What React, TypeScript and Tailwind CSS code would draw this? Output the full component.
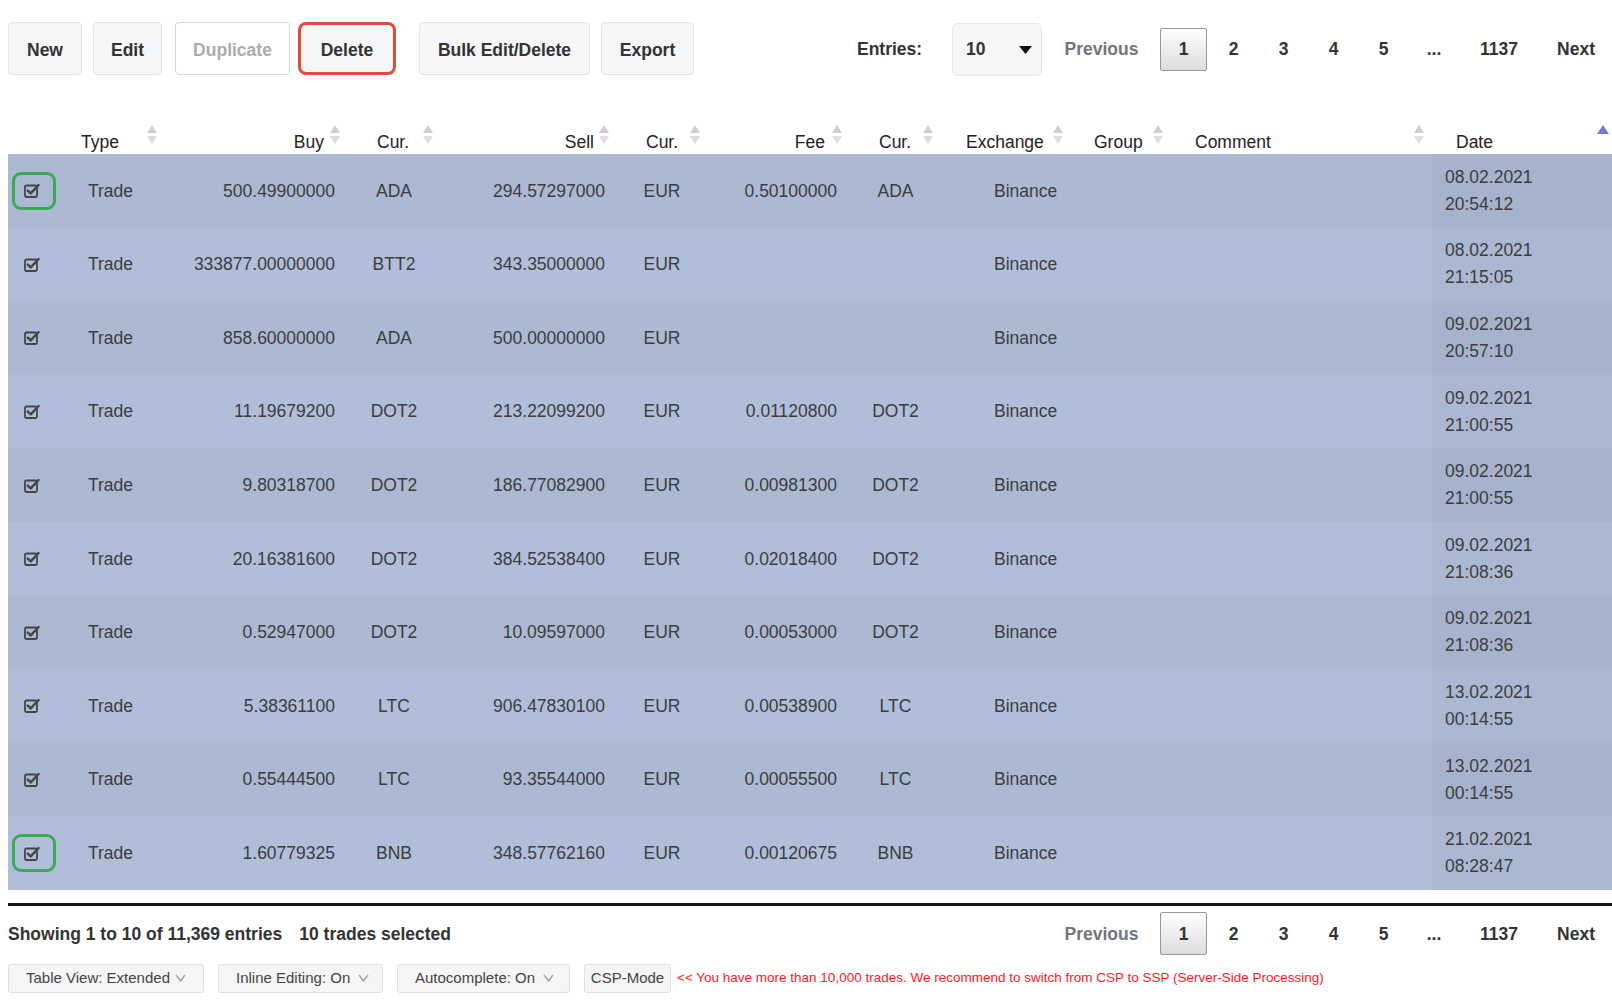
import React from "react";

type Trade = {
  buy: string;
  buyCur: string;
  sell: string;
  sellCur: string;
  fee: string;
  feeCur: string;
  exchange: string;
  date: string;
  time: string;
};

const trades: Trade[] = [
  { buy: "500.49900000", buyCur: "ADA", sell: "294.57297000", sellCur: "EUR", fee: "0.50100000", feeCur: "ADA", exchange: "Binance", date: "08.02.2021", time: "20:54:12" },
  { buy: "333877.00000000", buyCur: "BTT2", sell: "343.35000000", sellCur: "EUR", fee: "", feeCur: "", exchange: "Binance", date: "08.02.2021", time: "21:15:05" },
  { buy: "858.60000000", buyCur: "ADA", sell: "500.00000000", sellCur: "EUR", fee: "", feeCur: "", exchange: "Binance", date: "09.02.2021", time: "20:57:10" },
  { buy: "11.19679200", buyCur: "DOT2", sell: "213.22099200", sellCur: "EUR", fee: "0.01120800", feeCur: "DOT2", exchange: "Binance", date: "09.02.2021", time: "21:00:55" },
  { buy: "9.80318700", buyCur: "DOT2", sell: "186.77082900", sellCur: "EUR", fee: "0.00981300", feeCur: "DOT2", exchange: "Binance", date: "09.02.2021", time: "21:00:55" },
  { buy: "20.16381600", buyCur: "DOT2", sell: "384.52538400", sellCur: "EUR", fee: "0.02018400", feeCur: "DOT2", exchange: "Binance", date: "09.02.2021", time: "21:08:36" },
  { buy: "0.52947000", buyCur: "DOT2", sell: "10.09597000", sellCur: "EUR", fee: "0.00053000", feeCur: "DOT2", exchange: "Binance", date: "09.02.2021", time: "21:08:36" },
  { buy: "5.38361100", buyCur: "LTC", sell: "906.47830100", sellCur: "EUR", fee: "0.00538900", feeCur: "LTC", exchange: "Binance", date: "13.02.2021", time: "00:14:55" },
  { buy: "0.55444500", buyCur: "LTC", sell: "93.35544000", sellCur: "EUR", fee: "0.00055500", feeCur: "LTC", exchange: "Binance", date: "13.02.2021", time: "00:14:55" },
  { buy: "1.60779325", buyCur: "BNB", sell: "348.57762160", sellCur: "EUR", fee: "0.00120675", feeCur: "BNB", exchange: "Binance", date: "21.02.2021", time: "08:28:47" },
];

const GRID =
  "grid grid-cols-[62px_95px_180px_98px_172px_94px_138px_97px_130px_96px_262px_180px]";

// header columns: text placement + where the sort arrows sit
const headers = [
  { label: "", text: "", icon: "" },
  { label: "Type", text: "pl-[11px]", icon: "right-[8px]" },
  { label: "Buy", text: "justify-end pr-[21px]", icon: "right-[5px]" },
  { label: "Cur.", text: "pl-[32px]", icon: "right-[10px]" },
  { label: "Sell", text: "justify-end pr-[21px]", icon: "right-[6px]" },
  { label: "Cur.", text: "pl-[31px]", icon: "right-[9px]" },
  { label: "Fee", text: "justify-end pr-[22px]", icon: "right-[5px]" },
  { label: "Cur.", text: "pl-[32px]", icon: "right-[11px]" },
  { label: "Exchange", text: "pl-[22px]", icon: "right-[11px]" },
  { label: "Group", text: "pl-[20px]", icon: "right-[7px]" },
  { label: "Comment", text: "pl-[25px]", icon: "right-[8px]" },
  { label: "Date", text: "pl-[24px]", icon: "" },
];

function SortBoth() {
  return (
    <svg width="10" height="19" viewBox="0 0 10 19">
      <polygon points="0,8 5,0 10,8" fill="#cfcfcf" />
      <polygon points="0,11 10,11 5,19" fill="#dedede" />
    </svg>
  );
}

function SortAsc() {
  return (
    <svg width="12" height="9" viewBox="0 0 12 9">
      <polygon points="0,9 6,0 12,9" fill="#7479d6" />
    </svg>
  );
}

function CheckIcon() {
  return (
    <svg width="17" height="15" viewBox="0 0 17 15" fill="none">
      <rect x="1" y="2.5" width="12" height="11.5" rx="1.5" stroke="#454545" strokeWidth="1.8" />
      <path d="M3.8 7.6 L6.7 10.4 L14.6 2" stroke="#454545" strokeWidth="2.4" strokeLinecap="round" strokeLinejoin="round" />
    </svg>
  );
}

function Chevron() {
  return (
    <svg width="11" height="8" viewBox="0 0 11 8" fill="none">
      <path d="M1 1 L5.5 7 L10 1" stroke="#aaaaaa" strokeWidth="1.7" />
    </svg>
  );
}

function Pager() {
  const pages = ["2", "3", "4", "5"];
  return (
    <div className="flex items-center text-[17.5px] font-bold">
      <span className="w-[111px] text-center text-[#707680]">Previous</span>
      <span className="ml-[3px] w-[47px] h-[43px] flex items-center justify-center border border-[#979797] rounded-[2px] bg-gradient-to-b from-white to-[#dcdcdc] text-[#333]">
        1
      </span>
      {pages.map((p) => (
        <span key={p} className="ml-[3px] w-[47px] text-center text-[#333]">
          {p}
        </span>
      ))}
      <span className="ml-[3px] w-[48px] text-center text-[#333]">...</span>
      <span className="ml-[3px] w-[76px] text-center text-[#333]">1137</span>
      <span className="ml-[3px] w-[72px] text-center text-[#333]">Next</span>
    </div>
  );
}

export default function App() {
  const btn =
    "h-[53px] flex items-center justify-center pt-[3px] rounded-[4px] border border-[#e3e5e8] bg-[#f5f6f8] text-[17.5px] font-bold text-[#333]";

  return (
    <div className="w-[1612px] h-[1002px] overflow-hidden bg-white text-[#333] font-['Liberation_Sans',Arial,sans-serif]">
      {/* toolbar */}
      <div className="flex items-center pl-2 pt-[21px]">
        <button className={`${btn} w-[74px]`}>New</button>
        <button className={`${btn} w-[69px] ml-[11px]`}>Edit</button>
        <button className="h-[53px] w-[115px] ml-[13px] pt-[3px] flex items-center justify-center rounded-[4px] border border-[#d6d6d6] bg-white text-[17.5px] font-bold text-[#ababab]">
          Duplicate
        </button>
        <button className="h-[53px] w-[98px] ml-[8px] pt-[3px] flex items-center justify-center rounded-[8px] border-[3px] border-[#e24a3b] bg-[#f5f6f8] text-[17.5px] font-bold text-[#333]">
          Delete
        </button>
        <button className={`${btn} w-[171px] ml-[23px]`}>Bulk Edit/Delete</button>
        <button className={`${btn} w-[93px] ml-[11px]`}>Export</button>

        <div className="ml-auto flex items-center mt-[2px]">
          <span className="w-[65px] text-[17.5px] font-bold text-[#333]">Entries:</span>
          <div className="ml-[30px] w-[90px] h-[53px] flex items-center justify-between pl-[13px] pr-[9px] rounded-[5px] border border-[#e6e7ea] bg-[#f5f6f8]">
            <span className="text-[17.5px] font-bold text-[#333]">10</span>
            <svg width="13" height="8" viewBox="0 0 13 8">
              <polygon points="0,0 13,0 6.5,8" fill="#111" />
            </svg>
          </div>
          <div className="ml-[4px]">
            <Pager />
          </div>
        </div>
      </div>

      {/* table */}
      <div className="ml-2 mt-[42px]">
        <div className={`${GRID} h-[36px]`}>
          {headers.map((h, i) => (
            <div key={i} className={`relative flex items-end pb-[2px] text-[17.5px] leading-[20px] text-[#222] ${h.text}`}>
              {h.label}
              {h.icon && (
                <span className={`absolute top-[7px] ${h.icon}`}>
                  <SortBoth />
                </span>
              )}
              {h.label === "Date" && (
                <span className="absolute top-[7px] right-[3px]">
                  <SortAsc />
                </span>
              )}
            </div>
          ))}
        </div>

        {trades.map((t, i) => {
          const odd = i % 2 === 0;
          const marked = i === 0 || i === trades.length - 1;
          return (
            <div
              key={i}
              className={`${GRID} h-[73.6px] text-[17.5px] text-[#3d3d3d] ${odd ? "bg-[#abb9d3]" : "bg-[#b0beda]"}`}
            >
              <div className="flex items-center pl-[4px]">
                <div
                  className={`w-[44px] h-[38px] flex items-center pl-[9px] rounded-[9px] border-[3px] ${marked ? "border-[#3aaa55]" : "border-transparent"}`}
                >
                  <CheckIcon />
                </div>
              </div>
              <div className="flex items-center pl-[18px]">Trade</div>
              <div className="flex items-center justify-end pr-[10px]">{t.buy}</div>
              <div className="flex items-center justify-center">{t.buyCur}</div>
              <div className="flex items-center justify-end pr-[10px]">{t.sell}</div>
              <div className="flex items-center justify-center">{t.sellCur}</div>
              <div className="flex items-center justify-end pr-[10px]">{t.fee}</div>
              <div className="flex items-center justify-center">{t.feeCur}</div>
              <div className="flex items-center pl-[50px]">{t.exchange}</div>
              <div />
              <div />
              <div
                className={`flex flex-col justify-center pl-[13px] leading-[27px] ${odd ? "bg-[#a6b3cc]" : "bg-[#abb8d2]"}`}
              >
                <span>{t.date}</span>
                <span>{t.time}</span>
              </div>
            </div>
          );
        })}

        <div className="mt-[13px] h-[3px] bg-[#161616]" />

        {/* info + pager */}
        <div className="flex items-center h-[44px] mt-[6px]">
          <span className="text-[17.5px] font-bold text-[#333]">Showing 1 to 10 of 11,369 entries</span>
          <span className="ml-[17px] text-[17.5px] font-bold text-[#333]">10 trades selected</span>
          <div className="ml-auto">
            <Pager />
          </div>
        </div>

        {/* options */}
        <div className="flex items-center mt-[8px] text-[15px] text-[#444]">
          <div className="w-[196px] h-[29px] flex items-center justify-between pl-[17px] pr-[17px] rounded-[3px] border border-[#e0e0e0] bg-[#f5f5f5]">
            <span>Table View: Extended</span>
            <Chevron />
          </div>
          <div className="ml-[14px] w-[165px] h-[29px] flex items-center justify-between pl-[17px] pr-[13px] rounded-[3px] border border-[#e0e0e0] bg-[#f5f5f5]">
            <span>Inline Editing: On</span>
            <Chevron />
          </div>
          <div className="ml-[14px] w-[173px] h-[29px] flex items-center justify-between pl-[17px] pr-[15px] rounded-[3px] border border-[#e0e0e0] bg-[#f5f5f5]">
            <span>Autocomplete: On</span>
            <Chevron />
          </div>
          <div className="ml-[14px] w-[87px] h-[29px] flex items-center justify-center rounded-[3px] border border-[#e0e0e0] bg-[#f5f5f5]">
            CSP-Mode
          </div>
          <span className="ml-[6px] text-[13.5px] text-[#ff1a1a]">
            &lt;&lt; You have more than 10,000 trades. We recommend to switch from CSP to SSP (Server-Side Processing)
          </span>
        </div>
      </div>
    </div>
  );
}
